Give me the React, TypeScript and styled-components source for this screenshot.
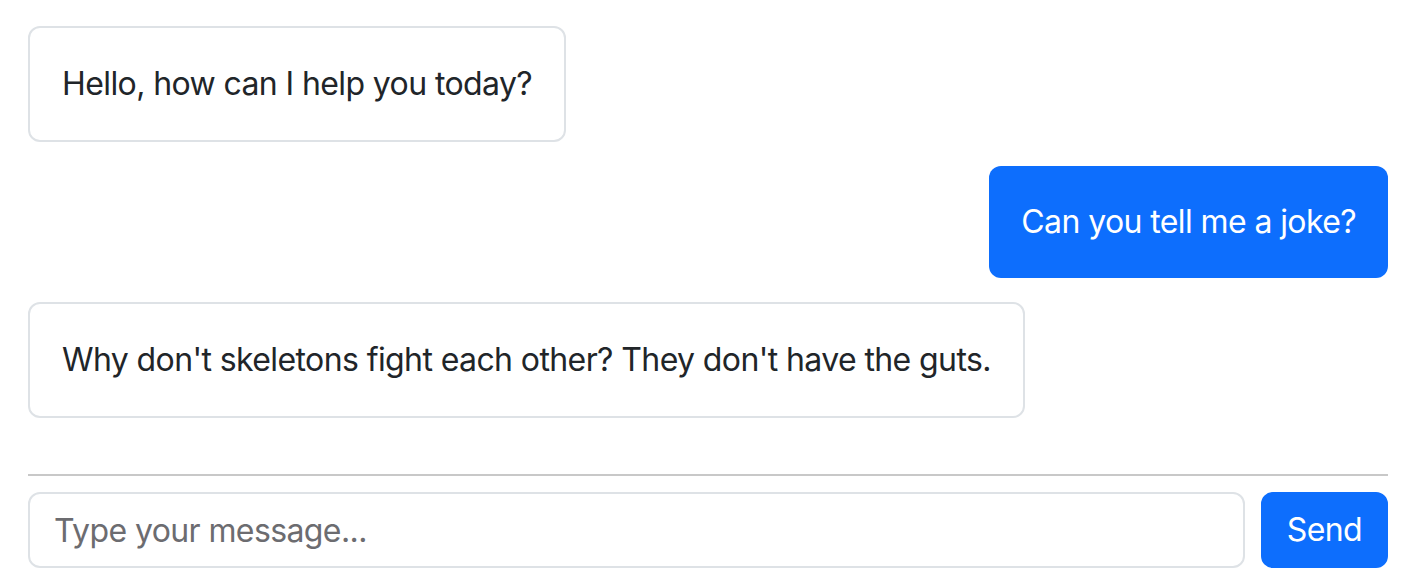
import React from "react";
import styled, { createGlobalStyle } from "styled-components";

const GlobalStyle = createGlobalStyle`
  html, body {
    margin: 0;
    padding: 0;
    background: #ffffff;
  }
  body {
    font-family: Inter, "Helvetica Neue", Arial, sans-serif;
    color: #212529;
  }
  * { box-sizing: border-box; }
`;

const Page = styled.div`
  padding: 26px 26px 0 28px;
  display: flex;
  flex-direction: column;
`;

const MessageList = styled.div`
  display: flex;
  flex-direction: column;
  gap: 24px;
`;

const Bubble = styled.div<{ $mine?: boolean }>`
  align-self: ${(p) => (p.$mine ? "flex-end" : "flex-start")};
  padding: 32px;
  border-radius: 12px;
  border: ${(p) => (p.$mine ? "none" : "2px solid #dee2e6")};
  background: ${(p) => (p.$mine ? "#0d6efd" : "#ffffff")};
  color: ${(p) => (p.$mine ? "#ffffff" : "#212529")};
  font-size: 32px;
  line-height: 48px;
  letter-spacing: -0.6px;
  white-space: nowrap;
`;

const Composer = styled.form`
  margin-top: 56px;
  border-top: 2px solid #c8c8c8;
  padding-top: 16px;
  display: flex;
  gap: 16px;
`;

const Input = styled.input`
  flex: 1;
  height: 76px;
  padding: 12px 24px;
  border: 2px solid #dee2e6;
  border-radius: 12px;
  font-family: Inter, "Helvetica Neue", Arial, sans-serif;
  font-size: 32px;
  line-height: 48px;
  color: #212529;
  outline: none;
  letter-spacing: -0.6px;
  &::placeholder {
    color: #6c6c70;
  }
`;

const SendButton = styled.button`
  height: 76px;
  padding: 12px 24px;
  border: 2px solid #0d6efd;
  border-radius: 12px;
  background: #0d6efd;
  color: #ffffff;
  font-family: Inter, "Helvetica Neue", Arial, sans-serif;
  font-size: 32px;
  line-height: 48px;
  letter-spacing: -0.6px;
  cursor: pointer;
`;

const messages = [
  { mine: false, text: "Hello, how can I help you today?" },
  { mine: true, text: "Can you tell me a joke?" },
  { mine: false, text: "Why don't skeletons fight each other? They don't have the guts." },
];

export default function App() {
  return (
    <>
      <GlobalStyle />
      <Page>
        <MessageList>
          {messages.map((m, i) => (
            <Bubble key={i} $mine={m.mine}>
              {m.text}
            </Bubble>
          ))}
        </MessageList>
        <Composer onSubmit={(e) => e.preventDefault()}>
          <Input placeholder="Type your message..." />
          <SendButton type="submit">Send</SendButton>
        </Composer>
      </Page>
    </>
  );
}
